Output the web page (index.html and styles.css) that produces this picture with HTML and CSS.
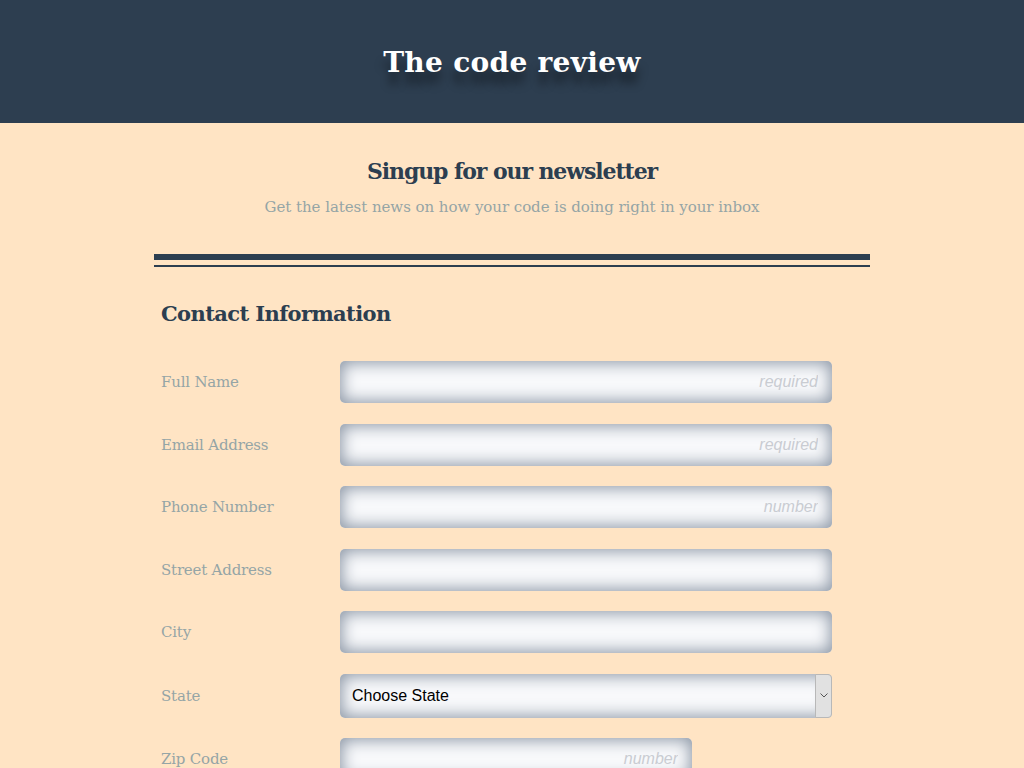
FILE: index.html
```html
<!DOCTYPE html>
<html lang="en">
<head>
<meta charset="utf-8">
<title>The code review</title>
<link rel="stylesheet" href="styles.css">
</head>
<body>
<header class="site-header">
  <h1 class="site-title">The code review</h1>
</header>
<main class="container">
  <section class="intro">
    <h2 class="intro-title">Singup for our newsletter</h2>
    <p class="intro-text">Get the latest news on how your code is doing right in your inbox</p>
  </section>
  <div class="divider"></div>
  <form class="form">
    <h3 class="form-title">Contact Information</h3>
    <div class="rows">
      <div class="row">
        <label class="label" for="name">Full Name</label>
        <input class="field" id="name" type="text" placeholder="required">
      </div>
      <div class="row">
        <label class="label" for="email">Email Address</label>
        <input class="field" id="email" type="text" placeholder="required">
      </div>
      <div class="row">
        <label class="label" for="phone">Phone Number</label>
        <input class="field" id="phone" type="text" placeholder="number">
      </div>
      <div class="row">
        <label class="label" for="street">Street Address</label>
        <input class="field" id="street" type="text">
      </div>
      <div class="row">
        <label class="label" for="city">City</label>
        <input class="field" id="city" type="text">
      </div>
      <div class="row">
        <label class="label" for="state">State</label>
        <div class="select-wrap">
          <select class="field select" id="state">
            <option>Choose State</option>
          </select>
          <span class="select-arrow"><svg width="8" height="5" viewBox="0 0 8 5"><path d="M0.5 0.5 L4 4 L7.5 0.5" fill="none" stroke="#555" stroke-width="1"/></svg></span>
        </div>
      </div>
      <div class="row">
        <label class="label" for="zip">Zip Code</label>
        <input class="field field-short" id="zip" type="text" placeholder="number">
      </div>
    </div>
  </form>
</main>
</body>
</html>
```
FILE: styles.css
```css
html, body {
  margin: 0;
  padding: 0;
}
body {
  background: #ffe4c4;
  font-family: "DejaVu Serif", "Liberation Serif", serif;
  color: #2c3e50;
}
.site-header {
  background: #2d3e50;
  height: 123px;
  display: flex;
  align-items: center;
  justify-content: center;
}
.site-title {
  margin: 0;
  padding-top: 2px;
  color: #fff;
  font-size: 28px;
  font-weight: bold;
  letter-spacing: 0.3px;
  text-shadow: 0 12px 10px rgba(0, 0, 0, 0.45);
}
.container {
  width: 716px;
  margin: 0 auto;
}
.intro {
  text-align: center;
  padding-top: 33px;
}
.intro-title {
  margin: 0;
  font-size: 22px;
  line-height: 30px;
  font-weight: bold;
  letter-spacing: -1.1px;
  color: #2c3e50;
}
.intro-text {
  margin: 10px 0 0;
  font-size: 15px;
  line-height: 22px;
  color: #95a5a6;
  letter-spacing: -0.05px;
}
.divider {
  margin-top: 36px;
  height: 5px;
  border-top: 6px solid #2c3e50;
  border-bottom: 2px solid #2c3e50;
}
.form {
  padding: 0 7px;
}
.form-title {
  margin: 32px 0 0;
  font-size: 21px;
  line-height: 30px;
  font-weight: bold;
  letter-spacing: -0.6px;
  color: #2c3e50;
}
.rows {
  margin-top: 32px;
  display: flex;
  flex-direction: column;
  gap: 20.5px;
}
.row {
  display: flex;
  align-items: center;
}
.label {
  width: 179px;
  flex: none;
  font-size: 15px;
  color: #95a5a6;
  letter-spacing: -0.2px;
}
.field {
  box-sizing: border-box;
  width: 492px;
  height: 42px;
  border: none;
  border-radius: 5px;
  background: #f8f9fb;
  box-shadow: inset 0 0 16px 2px #8a95a4;
  padding: 0 14px;
  font-family: "Liberation Sans", Arial, sans-serif;
  font-size: 16px;
  color: #000;
  text-align: right;
  outline: none;
}
.field::placeholder {
  color: #c9ccd2;
  font-style: italic;
}
.field-short {
  width: 352px;
}
.select-wrap {
  position: relative;
  width: 492px;
  height: 44px;
}
.select {
  -webkit-appearance: none;
  appearance: none;
  height: 44px;
  text-align: left;
  padding: 0 12px;
}
.select-arrow {
  position: absolute;
  right: 0;
  top: 0;
  width: 15px;
  height: 42px;
  background: #e1e1e1;
  border: 1px solid #b8b8b8;
  border-radius: 0 4px 4px 0;
  display: flex;
  align-items: center;
  justify-content: center;
}
```
